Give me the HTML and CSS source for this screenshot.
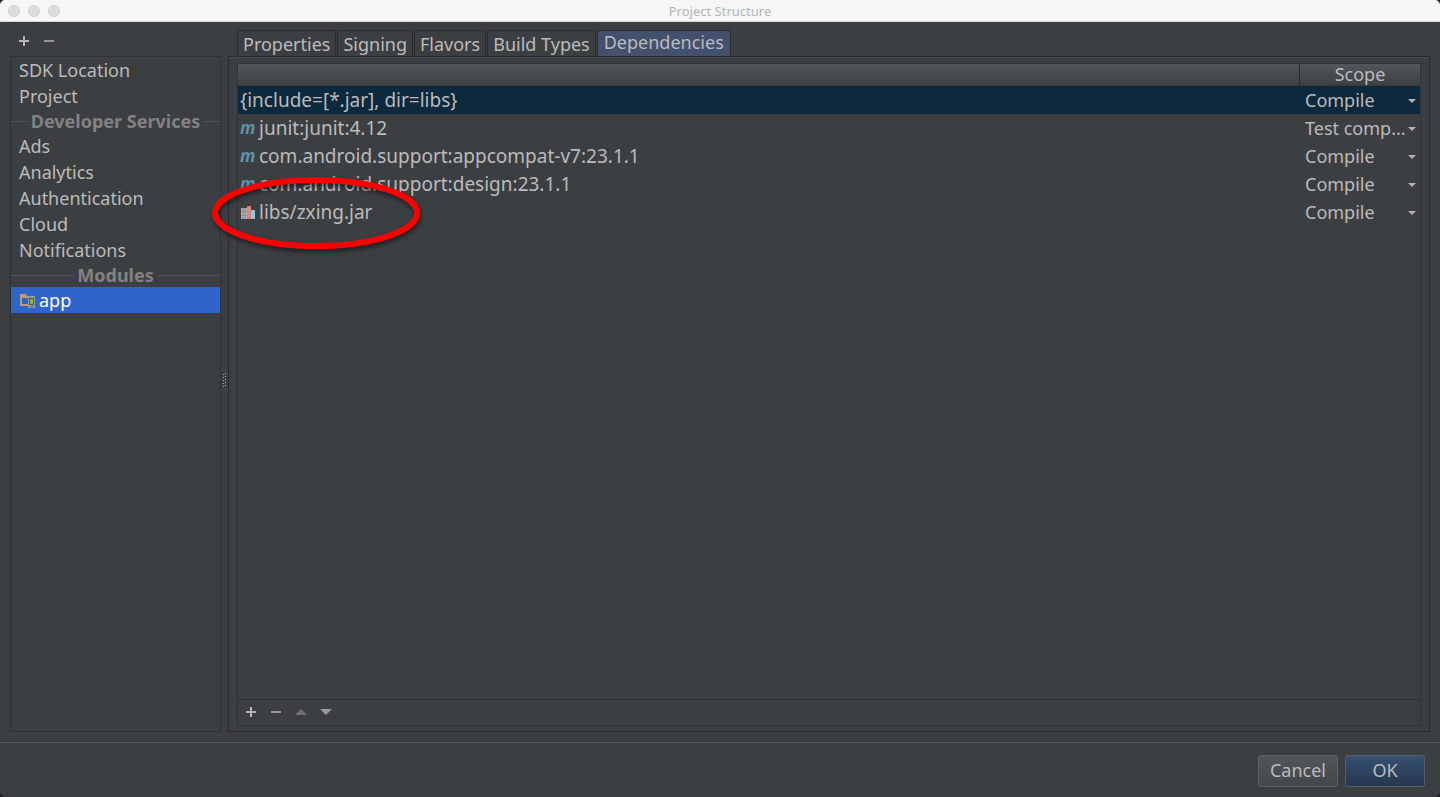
FILE: index.html
```html
<!DOCTYPE html>
<html lang="en">
<head>
<meta charset="utf-8">
<title>Project Structure</title>
<link rel="stylesheet" href="styles.css">
</head>
<body>
<div class="window">
  <header class="titlebar">
    <div class="lights"><span class="light"></span><span class="light"></span><span class="light"></span></div>
    <h1 class="title">Project Structure</h1>
  </header>

  <main class="content">
    <aside class="sidebar">
      <div class="side-tools">
        <button class="tool" type="button" aria-label="Add module"><svg width="10" height="10" viewBox="0 0 10 10"><path d="M0 5h10M5 0v10" stroke="#b4b4b4" stroke-width="2"/></svg></button>
        <button class="tool" type="button" aria-label="Remove module"><svg width="10" height="10" viewBox="0 0 10 10"><path d="M0 5h10" stroke="#969696" stroke-width="2"/></svg></button>
      </div>
      <nav class="tree">
        <a class="item" href="#sdk">SDK Location</a>
        <a class="item" href="#project">Project</a>
        <h2 class="separator">Developer Services</h2>
        <a class="item" href="#ads">Ads</a>
        <a class="item" href="#analytics">Analytics</a>
        <a class="item" href="#authentication">Authentication</a>
        <a class="item" href="#cloud">Cloud</a>
        <a class="item" href="#notifications">Notifications</a>
        <h2 class="separator">Modules</h2>
        <a class="item selected" href="#app"><svg width="16" height="16" viewBox="0 0 16 16"><path d="M1 2h6l1 2h7v2H3v6h6v2H1z" fill="#c09a6b"/><path d="M9 4h7v12H9z" fill="#8f9ba3"/><path d="M10 6h5v7h-5z" fill="#4a5a60"/><path d="M11 7h3v5h-3z" fill="#86b83c"/><path d="M12 14h2v1h-2z" fill="#3c4a5b"/></svg>app</a>
      </nav>
    </aside>

    <div class="splitter">
      <svg width="5" height="16" viewBox="0 0 5 16" fill="#a6a6a6"><path d="M3 0h1v1H3zM1 1h1v1H1zM3 3h1v1H3zM1 4h1v1H1zM3 6h1v1H3zM1 7h1v1H1zM3 9h1v1H3zM1 10h1v1H1zM3 12h1v1H3zM1 13h1v1H1z"/></svg>
    </div>

    <section class="editor">
      <div class="tabs" role="tablist">
        <button class="tab" type="button" role="tab">Properties</button>
        <button class="tab" type="button" role="tab">Signing</button>
        <button class="tab" type="button" role="tab">Flavors</button>
        <button class="tab" type="button" role="tab">Build Types</button>
        <button class="tab active" type="button" role="tab" aria-selected="true">Dependencies</button>
      </div>
      <div class="panel">
        <div class="frame">
          <div class="table-area">
            <table class="deps">
              <thead>
                <tr><th class="name-head" aria-label="Dependency"></th><th class="scope-head">Scope</th></tr>
              </thead>
              <tbody>
                <tr class="current">
                  <td><div class="dep">{include=[*.jar], dir=libs}</div></td>
                  <td><div class="scope"><select aria-label="Scope of libs"><option>Compile</option></select><svg class="arrow" width="8" height="4" viewBox="0 0 8 4"><path d="M0 0h8L4 4z"/></svg></div></td>
                </tr>
                <tr>
                  <td><div class="dep"><span class="maven">m</span>junit:junit:4.12</div></td>
                  <td><div class="scope"><select aria-label="Scope of junit"><option>Test comp...</option></select><svg class="arrow" width="8" height="4" viewBox="0 0 8 4"><path d="M0 0h8L4 4z"/></svg></div></td>
                </tr>
                <tr>
                  <td><div class="dep"><span class="maven">m</span>com.android.support:appcompat-v7:23.1.1</div></td>
                  <td><div class="scope"><select aria-label="Scope of appcompat"><option>Compile</option></select><svg class="arrow" width="8" height="4" viewBox="0 0 8 4"><path d="M0 0h8L4 4z"/></svg></div></td>
                </tr>
                <tr>
                  <td><div class="dep"><span class="maven">m</span>com.android.support:design:23.1.1</div></td>
                  <td><div class="scope"><select aria-label="Scope of design"><option>Compile</option></select><svg class="arrow" width="8" height="4" viewBox="0 0 8 4"><path d="M0 0h8L4 4z"/></svg></div></td>
                </tr>
                <tr>
                  <td><div class="dep"><span class="jar"><svg width="15" height="14" viewBox="0 0 15 14"><path d="M1 3h6v11H1z" fill="#aeb0b2"/><path d="M7 1h4v13H7z" fill="#dc7b70"/><path d="M11 5h4v9h-4z" fill="#7cc0e6"/><path d="M1 6.500h6M1 10.500h6M3 3v11M5 3v11" stroke="#77797b" stroke-width=".6"/><path d="M7 4.500h4M7 8h4M7 11h4M9 1v13" stroke="#eca298" stroke-width=".5"/><path d="M11 8h4M11 11h4M13 5v9" stroke="#b5dcf3" stroke-width=".5"/></svg></span>libs/zxing.jar
                    <svg class="ring" width="214" height="80" viewBox="0 0 214 80"><ellipse cx="105" cy="36" rx="101" ry="33" fill="none" stroke="#fd0000" stroke-width="6"/></svg></div></td>
                  <td><div class="scope"><select aria-label="Scope of zxing"><option>Compile</option></select><svg class="arrow" width="8" height="4" viewBox="0 0 8 4"><path d="M0 0h8L4 4z"/></svg></div></td>
                </tr>
              </tbody>
            </table>
          </div>
          <div class="table-tools">
            <button class="tool" type="button" aria-label="Add dependency"><svg width="10" height="10" viewBox="0 0 10 10"><path d="M0 5h10M5 0v10" stroke="#b4b4b4" stroke-width="2"/></svg></button>
            <button class="tool" type="button" aria-label="Remove dependency"><svg width="10" height="10" viewBox="0 0 10 10"><path d="M0 5h10" stroke="#969696" stroke-width="2"/></svg></button>
            <button class="tool" type="button" aria-label="Move up"><svg width="12" height="6" viewBox="0 0 12 6"><path d="M0 6h12L6 0z" fill="#6f6f6f"/></svg></button>
            <button class="tool" type="button" aria-label="Move down"><svg width="12" height="6" viewBox="0 0 12 6"><path d="M0 0h12L6 6z" fill="#999"/></svg></button>
          </div>
        </div>
      </div>
    </section>
  </main>

  <footer class="actions">
    <button class="button" type="button">Cancel</button>
    <button class="button primary" type="button">OK</button>
  </footer>
</div>
</body>
</html>
```

FILE: styles.css
```css
* {
  box-sizing: border-box;
}

body {
  margin: 0;
  background: #1a1b1c;
  color: #bbb;
  font: 18px/26px "Noto Sans", sans-serif;
}

button,
select {
  margin: 0;
  padding: 0;
  border: 0;
  background: none;
  color: inherit;
  font: inherit;
}

svg {
  display: block;
  flex: none;
}

.window {
  display: flex;
  flex-direction: column;
  min-height: 100vh;
  overflow: hidden;
  border-radius: 5px;
  background: #3c3f41;
}

.titlebar {
  display: grid;
  grid-template-columns: 1fr auto 1fr;
  align-items: center;
  height: 22px;
  padding: 0 8px;
  border-bottom: 1px solid #d5d7d8;
  background: #f6f6f6;
}

.lights {
  display: flex;
  gap: 8px;
}

.light {
  width: 12px;
  height: 12px;
  border: 1px solid #cecece;
  border-radius: 50%;
  background: #dcdcdc;
}

.title {
  margin: 0;
  color: #b4b4b4;
  font-size: 13px;
  font-weight: 400;
  line-height: 20px;
}

.content {
  display: flex;
  flex: 1;
  padding: 8px 10px 10px;
}

.sidebar {
  display: flex;
  flex-direction: column;
  width: 211px;
}

.side-tools,
.table-tools {
  display: flex;
  align-items: center;
}

.side-tools {
  height: 26px;
  padding: 0 1px 4px;
}

.tool {
  display: grid;
  place-items: center;
  width: 25px;
  height: 22px;
}

.tree {
  flex: 1;
  border: 1px solid #2f3234;
}

.item {
  display: flex;
  align-items: center;
  gap: 4px;
  height: 26px;
  padding: 0 8px;
  color: inherit;
  text-decoration: none;
}

.selected {
  background: #2f65ca;
  color: #fff;
}

.separator {
  display: flex;
  align-items: center;
  gap: 3px;
  margin: 0;
  color: #828282;
  font-size: 18px;
  font-weight: 700;
  line-height: 24px;
}

.separator::before,
.separator::after {
  flex: 1;
  height: 1px;
  background: #505254;
  content: "";
}

.splitter {
  display: grid;
  place-items: center;
  width: 7px;
}

.editor {
  display: flex;
  flex: 1;
  flex-direction: column;
  min-width: 0;
}

.tabs {
  display: flex;
  gap: 1px;
  height: 26px;
  padding-left: 9px;
}

.tab {
  padding: 1px 5px 0;
  border: 1px solid #2b2d2f;
  border-bottom: 0;
  border-radius: 3px 3px 0 0;
  line-height: 25px;
}

.active {
  padding: 0 6px 2px;
  background: #43506e;
  line-height: 23px;
}

.panel {
  display: flex;
  flex: 1;
  padding: 6px 8px 5px;
  border: 1px solid #292b2d;
  box-shadow: inset 0 1px #404a5b;
}

.frame {
  display: flex;
  flex: 1;
  flex-direction: column;
  border: 1px solid #303335;
}

.table-area {
  flex: 1;
}

.deps {
  width: 100%;
  border-spacing: 0;
  table-layout: fixed;
}

.deps th {
  height: 22px;
  padding: 0;
  border-bottom: 1px solid #37393b;
  background: linear-gradient(#535759, #3d4042);
  font-weight: 400;
  line-height: 21px;
}

.deps .scope-head {
  width: 121px;
  border-left: 1px solid #2b2d2f;
}

.deps td {
  height: 28px;
  padding: 0;
}

.current {
  background: #0d293e;
}

.dep {
  display: flex;
  position: relative;
  align-items: center;
  padding-left: 2px;
  font-size: 19px;
  line-height: 28px;
}

.maven,
.jar {
  width: 19px;
}

.maven {
  color: #5f93ae;
  font-size: 17px;
  font-style: italic;
  font-weight: 700;
}

.ring {
  position: absolute;
  top: -21px;
  left: -27px;
  filter: drop-shadow(1px 3px 2px #00000080);
}

.scope {
  position: relative;
}

.scope select {
  display: block;
  width: 100%;
  height: 28px;
  padding-left: 6px;
  appearance: none;
}

.arrow {
  position: absolute;
  top: 13px;
  right: 4px;
  fill: #b4b4b4;
}

.table-tools {
  height: 26px;
  padding-bottom: 1px;
  border-top: 1px solid #303335;
}

.actions {
  display: flex;
  justify-content: flex-end;
  gap: 7px;
  padding: 12px 15px 10px;
  border-top: 1px solid #525557;
}

.button {
  width: 80px;
  height: 32px;
  padding-bottom: 2px;
  border: 1px solid #5e6163;
  border-radius: 3px;
  background: linear-gradient(#525658, #434749);
}

.primary {
  border-color: #55606d;
  background: linear-gradient(#36506f, #263750);
}
```
